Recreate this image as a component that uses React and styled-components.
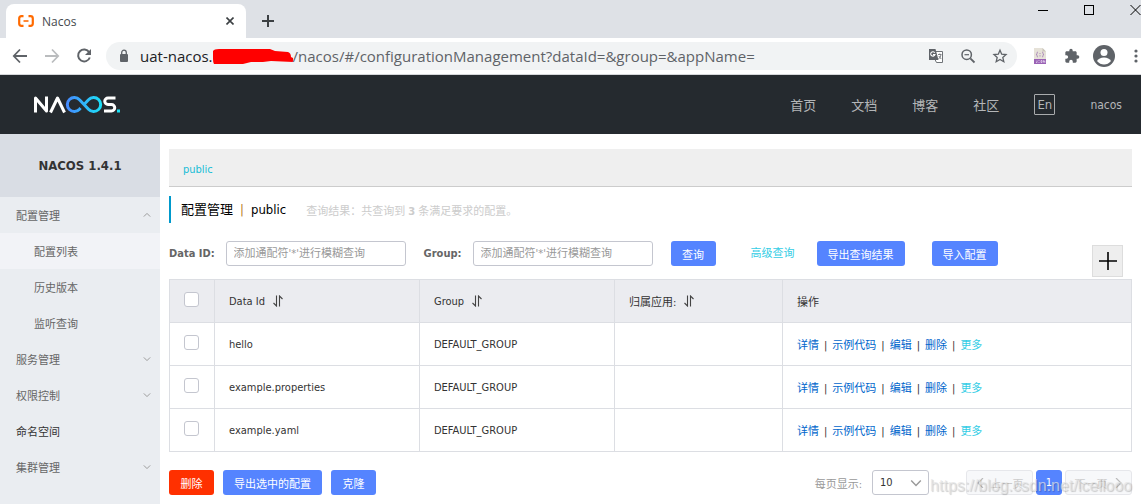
import React from "react";
import styled, { createGlobalStyle } from "styled-components";

const GlobalStyle = createGlobalStyle`
  * {
    box-sizing: border-box;
  }

  body {
    margin: 0;
    background-color: white;
    color: #333333;
    font-family: "DejaVu Sans Condensed", "Noto Sans CJK SC", sans-serif;
    font-size: 11px;
  }

  button,
  input,
  select {
    font-family: inherit;
    font-size: 11px;
    margin: 0;
  }

  a {
    text-decoration: none;
  }

  svg {
    display: block;
    flex-shrink: 0;
  }
`;

const Page = styled.div`
  min-height: 100vh;
  display: flex;
  flex-direction: column;
`;

const TabStrip = styled.div`
  height: 38px;
  display: flex;
  align-items: flex-end;
  padding-left: 6px;
  background-color: #dee1e6;
`;

const Tab = styled.div`
  width: 240px;
  height: 34px;
  display: flex;
  align-items: center;
  gap: 8px;
  padding: 0 10px 0 12px;
  border-radius: 8px 8px 0 0;
  background-color: white;
  font-family: "Open Sans", sans-serif;
  font-size: 12px;
  color: #45494d;
`;

const TabName = styled.span`
  flex: 1;
`;

const IconButton = styled.button`
  display: flex;
  align-items: center;
  justify-content: center;
  width: ${(props) => props.$width || 16}px;
  height: ${(props) => props.$height || 16}px;
  padding: 0;
  border: none;
  background: none;
  color: ${(props) => props.$color || "#5f6368"};
`;

const NewTab = styled.div`
  height: 34px;
  display: flex;
  align-items: center;
  padding-left: 14px;
`;

const WindowButtons = styled.div`
  height: 38px;
  display: flex;
  align-items: flex-start;
  margin-left: auto;

  button {
    flex-shrink: 0;
  }
`;

const Toolbar = styled.div`
  height: 37px;
  display: flex;
  align-items: center;
  padding: 0 0 0 12px;
  background-color: white;
  border-bottom: 1px solid #d5d7da;
`;

const NavButtons = styled.div`
  display: flex;
  gap: 16px;
  margin-right: 14px;
`;

const AddressBar = styled.div`
  flex: 1;
  height: 28px;
  display: flex;
  align-items: center;
  padding: 0 9px 0 10px;
  border-radius: 14px;
  background-color: #f1f3f4;
`;

const Address = styled.div`
  flex: 1;
  display: flex;
  align-items: center;
  margin-left: 8px;
  font-family: "Open Sans", sans-serif;
  font-size: 15px;
  line-height: 20px;
  color: #5f6368;
  white-space: nowrap;
`;

const Host = styled.span`
  color: #202124;
`;

const AddressIcons = styled.div`
  display: flex;
  gap: 16px;
`;

const Extensions = styled.div`
  display: flex;
  align-items: center;
  padding-left: 7px;
`;

const Header = styled.header`
  height: 59px;
  display: flex;
  align-items: center;
  justify-content: space-between;
  padding: 0 19px 0 34px;
  background-color: #252a2f;
`;

const HeaderNav = styled.nav`
  display: flex;
  align-items: center;
  gap: 35px;
`;

const HeaderLink = styled.a`
  font-size: ${(props) => (props.$small ? 12 : 13)}px;
  color: #b4b6b8;
`;

const LanguageButton = styled.button`
  width: 21px;
  height: 21px;
  padding: 0;
  border: 1px solid #a9abad;
  border-radius: 1px;
  background: none;
  color: #b4b6b8;
  line-height: 18px;

  && {
    font-size: 13px;
  }
`;

const Body = styled.div`
  flex: 1;
  display: flex;
`;

const Sidebar = styled.aside`
  width: 160px;
  flex-shrink: 0;
  background-color: #eaedf1;
`;

const SidebarTitle = styled.h1`
  height: 63px;
  margin: 0;
  font-size: 13px;
  line-height: 63px;
  text-align: center;
  background-color: #d9dde4;
`;

const MenuItem = styled.a`
  height: 36px;
  display: flex;
  align-items: center;
  justify-content: space-between;
  padding: 0 9px 0 ${(props) => (props.$sub ? 34 : 16)}px;
  background-color: ${(props) => (props.$active ? "#f2f3f7" : "transparent")};
  color: ${(props) => (props.$dark ? "#333333" : "#666666")};
`;

const Content = styled.main`
  flex: 1;
  min-width: 0;
  padding: 15px 9px 8px;
`;

const NamespaceBar = styled.div`
  height: 38px;
  padding: 0 14px;
  border-bottom: 1px solid #cccccc;
  background-color: #efefef;
  line-height: 42px;

  a {
    color: #18bdd6;
  }
`;

const TitleRow = styled.div`
  height: 27px;
  display: flex;
  align-items: center;
  margin-top: 9px;
  padding-left: 10px;
  border-left: 2px solid #09c;
`;

const Title = styled.h2`
  display: flex;
  align-items: baseline;
  gap: 7px;
  margin: 0 20px 0 0;
  font-size: 13px;
  font-weight: normal;
  line-height: 27px;
  color: #000000;
`;

const Divider = styled.span`
  color: #b8791a;
`;

const ResultText = styled.span`
  color: #cccccc;
`;

const SearchRow = styled.form`
  display: flex;
  align-items: flex-start;
  margin: 18px 9px 2px 0;
`;

const FieldLabel = styled.label`
  margin-right: 11px;
  font-weight: bold;
  line-height: 25px;
  color: #666666;
  white-space: nowrap;
`;

const TextInput = styled.input`
  width: 180px;
  height: 25px;
  margin-right: 18px;
  padding: 0 7px;
  border: 1px solid #c4c6cf;
  border-radius: 3px;

  &::placeholder {
    color: #999999;
  }
`;

const Button = styled.button`
  height: 25px;
  min-width: 45px;
  padding: 0 11px;
  border: none;
  border-radius: 3px;
  background-color: ${(props) => (props.$danger ? "#ff3000" : "#5584ff")};
  color: white;
  white-space: nowrap;
`;

const SearchButtons = styled.div`
  display: flex;
  flex: 1;
`;

const AdvancedLink = styled.a`
  margin: 0 22px 0 35px;
  line-height: 25px;
  color: #33cde5;
  white-space: nowrap;
`;

const ImportButton = styled(Button)`
  margin-left: 27px;
`;

const AddButton = styled.button`
  width: 31px;
  height: 32px;
  display: flex;
  align-items: center;
  justify-content: center;
  margin-top: 4px;
  padding: 0;
  border: 1px solid #dddddd;
  background-color: #eeeeee;
`;

const ConfigTable = styled.table`
  width: 100%;
  border-collapse: collapse;
  table-layout: fixed;

  th,
  td {
    height: 43px;
    padding: 0 14px;
    border: 1px solid #dcdee3;
    font-weight: normal;
    text-align: left;
  }

  th {
    background-color: #ebecf0;
  }
`;

const Column = styled.col`
  width: ${(props) => props.$width};
`;

const HeadCell = styled.span`
  display: flex;
  align-items: center;
  gap: 8px;
`;

const Checkbox = styled.input`
  appearance: none;
  display: block;
  width: 15px;
  height: 15px;
  margin: 0 0 4px;
  border: 1px solid #c4c6cf;
  border-radius: 3px;
  background-color: white;
`;

const Actions = styled.div`
  display: flex;
  align-items: baseline;
  gap: 5px;
  white-space: nowrap;
`;

const ActionLink = styled.a`
  color: ${(props) => (props.$more ? "#33cde5" : "#0066cc")};
`;

const Footer = styled.div`
  display: flex;
  align-items: center;
  gap: 9px;
  margin-top: 18px;
`;

const Pagination = styled.nav`
  display: flex;
  align-items: center;
  margin-left: auto;
`;

const SizeLabel = styled.label`
  margin-right: 10px;
  color: #999999;
`;

const SizeSelect = styled.div`
  display: grid;
  align-items: center;
  width: 57px;
  margin-right: 37px;

  select,
  svg {
    grid-area: 1 / 1;
  }

  select {
    appearance: none;
    width: 100%;
    height: 25px;
    padding: 0 7px;
    border: 1px solid #c4c6cf;
    border-radius: 3px;
    background-color: white;
    color: #333333;
  }

  svg {
    justify-self: end;
    margin-right: 7px;
    pointer-events: none;
  }
`;

const PageButton = styled.button`
  height: 25px;
  width: ${(props) => (props.$current ? 26 : 67)}px;
  display: flex;
  align-items: center;
  justify-content: center;
  gap: 5px;
  padding: 0;
  border: 1px solid ${(props) => (props.$current ? "#5584ff" : "#e6e7eb")};
  border-radius: 3px;
  background-color: ${(props) => (props.$current ? "#5584ff" : "#f7f8fa")};
  color: ${(props) => (props.$current ? "white" : "#cccccc")};
`;

const PageButtons = styled.div`
  display: flex;
  gap: 3px;
`;

const Watermark = styled.div`
  position: absolute;
  right: 9px;
  bottom: 8px;
  font-family: "Liberation Sans", sans-serif;
  font-size: 16px;
  line-height: 20px;
  color: rgba(228, 228, 228, 0.7);
  text-shadow: 1px 1px 1px rgba(0, 0, 0, 0.2);
  pointer-events: none;
`;

const Frame = styled.div`
  position: relative;
`;

const Chevron = ({ direction, size = 8, color = "#999999" }) => {
  const paths = {
    up: "M1 7 L5 3 L9 7",
    down: "M1 3 L5 7 L9 3",
    left: "M7 0 L2 5 L7 10",
    right: "M3 0 L8 5 L3 10",
  };
  return (
    <svg width={size} height={size} viewBox="0 0 10 10">
      <path d={paths[direction]} fill="none" stroke={color} strokeWidth="1.2" />
    </svg>
  );
};

const SortIcon = () => (
  <svg width="10" height="12" viewBox="0 0 10 12">
    <path
      d="M3.5 0.5 V11 L0.5 8 M6.5 11.5 V1 L9.5 4"
      fill="none"
      stroke="#444444"
      strokeWidth="1.1"
    />
  </svg>
);

const NacosLogo = () => (
  <svg width="87" height="18" viewBox="0 1 87 18" role="img" aria-label="Nacos">
    <defs>
      <linearGradient id="loop" gradientUnits="userSpaceOnUse" x1="32" x2="68" y1="0" y2="0">
        <stop offset="0" stopColor="#4688ff" />
        <stop offset="1" stopColor="#1be1f6" />
      </linearGradient>
    </defs>
    <g fill="none" strokeWidth="3" strokeLinejoin="round">
      <path d="M1.5 17.5 V3 L12.5 16 V1.5" stroke="white" />
      <path d="M16.5 17.5 L23.5 3 L30.5 17.5" stroke="white" />
      <path
        d="M46.5 13 L45.5 14.2 A7 7 0 1 1 45.5 4.8 L54.5 14.2 A7 7 0 1 0 54.5 4.8 L50.5 9"
        stroke="url(#loop)"
      />
      <path
        d="M81.5 3 H74 A3.2 3.2 0 0 0 74 9.5 H77.5 A3.2 3.2 0 0 1 77.5 16 H70"
        stroke="white"
      />
    </g>
    <rect x="83" y="14.5" width="3" height="3" fill="#1be1f6" />
  </svg>
);

const Favicon = () => (
  <svg width="16" height="12" viewBox="0 0 16 12">
    <path
      d="M5.5 1.2 H3.5 Q1.2 1.2 1.2 3.5 V8.5 Q1.2 10.8 3.5 10.8 H5.5 M10.5 1.2 H12.5 Q14.8 1.2 14.8 3.5 V8.5 Q14.8 10.8 12.5 10.8 H10.5"
      fill="none"
      stroke="#ff6a00"
      strokeWidth="2.2"
    />
    <path d="M5.5 6 H10.5" stroke="#ff6a00" strokeWidth="1.6" />
  </svg>
);

const Redaction = () => (
  <svg width="80" height="18" viewBox="2 0 80 18">
    <path
      d="M2 4 Q3 2 8 2 L59 2 L64 4 L77 5 Q80 6 80 10 L82 11 L82 15 L60 14 L52 15 L40 15 L32 17 L3 17 Q2 16 2 12 Z"
      fill="#ff0000"
    />
  </svg>
);

const BrowserTabs = () => (
  <TabStrip>
    <Tab>
      <Favicon />
      <TabName>Nacos</TabName>
      <IconButton aria-label="Close tab" $width={12} $color="#3c4043">
        <svg width="8" height="8" viewBox="0 0 8 8">
          <path d="M0.5 0.5 L7.5 7.5 M7.5 0.5 L0.5 7.5" stroke="currentColor" strokeWidth="1.6" />
        </svg>
      </IconButton>
    </Tab>
    <NewTab>
      <IconButton aria-label="New tab" $color="#3c4043">
        <svg width="12" height="12" viewBox="0 0 12 12">
          <path d="M6 0 V12 M0 6 H12" stroke="currentColor" strokeWidth="2" />
        </svg>
      </IconButton>
    </NewTab>
    <WindowButtons>
      <IconButton aria-label="Minimize" $width={46} $height={20} $color="#000000">
        <svg width="10" height="10" viewBox="0 0 10 10">
          <path d="M0 5.5 H10" stroke="currentColor" />
        </svg>
      </IconButton>
      <IconButton aria-label="Maximize" $width={46} $height={20} $color="#000000">
        <svg width="10" height="10" viewBox="0 0 10 10">
          <rect x="0.5" y="0.5" width="9" height="9" fill="none" stroke="currentColor" />
        </svg>
      </IconButton>
      <IconButton aria-label="Close" $width={29} $height={20} $color="#000000">
        <svg width="29" height="10" viewBox="0 0 29 10">
          <path d="M18.5 0 L28.5 10 M28.5 0 L18.5 10" stroke="currentColor" />
        </svg>
      </IconButton>
    </WindowButtons>
  </TabStrip>
);

const BrowserToolbar = () => (
  <Toolbar>
    <NavButtons>
      <IconButton aria-label="Back">
        <svg width="16" height="16" viewBox="0 0 16 16">
          <path d="M15 8 H2 M8 1.5 L1.8 8 L8 14.5" fill="none" stroke="currentColor" strokeWidth="1.8" />
        </svg>
      </IconButton>
      <IconButton aria-label="Forward" $color="#babcbe">
        <svg width="16" height="16" viewBox="0 0 16 16">
          <path d="M1 8 H14 M8 1.5 L14.2 8 L8 14.5" fill="none" stroke="currentColor" strokeWidth="1.8" />
        </svg>
      </IconButton>
      <IconButton aria-label="Reload">
        <svg width="16" height="16" viewBox="0 0 16 16">
          <path d="M13.2 4.2 A6 6 0 1 0 13.8 9.5" fill="none" stroke="currentColor" strokeWidth="2" />
          <path d="M15 1 V7 H9 Z" fill="currentColor" />
        </svg>
      </IconButton>
    </NavButtons>
    <AddressBar>
      <svg width="16" height="16" viewBox="0 0 16 16">
        <rect x="4" y="6" width="8" height="8" rx="1" fill="#5f6368" />
        <path d="M5.7 6.5 V4.5 A2.3 2.3 0 0 1 10.3 4.5 V6.5" fill="none" stroke="#5f6368" strokeWidth="1.3" />
      </svg>
      <Address>
        <Host>uat-nacos.</Host>
        <Redaction />
        <span>/nacos/#/configurationManagement?dataId=&amp;group=&amp;appName=</span>
      </Address>
      <AddressIcons>
        <IconButton aria-label="Translate">
          <svg width="16" height="16" viewBox="0 0 16 16">
            <path d="M7 3.5 H14.5 V14.5 H8.5 L7 11.5" fill="white" stroke="#6f7377" />
            <path d="M1 1 H7.5 L10.5 12 H1 Z" fill="#5f6368" />
            <path d="M6.8 4.8 A2.2 2.2 0 1 0 7 6.6 H5" fill="none" stroke="white" strokeWidth="1.1" />
            <path d="M10 6.5 H13.5 M11.8 5.5 V6.5 M13 6.8 Q12.5 9.5 10.5 11 M10.8 8 L13.2 11" fill="none" stroke="#6f7377" strokeWidth="0.9" />
          </svg>
        </IconButton>
        <IconButton aria-label="Zoom">
          <svg width="16" height="16" viewBox="0 0 16 16">
            <circle cx="6.7" cy="6.7" r="4.7" fill="none" stroke="currentColor" strokeWidth="1.5" />
            <path d="M10.3 10.3 L14.5 14.5" stroke="currentColor" strokeWidth="1.8" />
            <path d="M4.5 6.7 H9" stroke="currentColor" strokeWidth="1.2" />
          </svg>
        </IconButton>
        <IconButton aria-label="Bookmark">
          <svg width="16" height="16" viewBox="0 0 16 16">
            <path
              d="M8 2.2 L9.7 6.2 L14 6.6 L10.8 9.4 L11.8 13.7 L8 11.4 L4.2 13.7 L5.2 9.4 L2 6.6 L6.3 6.2 Z"
              fill="none"
              stroke="currentColor"
              strokeWidth="1.3"
            />
          </svg>
        </IconButton>
      </AddressIcons>
    </AddressBar>
    <Extensions>
      <IconButton aria-label="JSON viewer" $width={32}>
        <svg width="16" height="16" viewBox="0 0 16 16">
          <path d="M2 0 H10.5 L14 3.5 V16 H2 Z" fill="#e6e2d8" />
          <path d="M10.5 0 L14 3.5 H10.5 Z" fill="#c9c4ba" />
          <path d="M6 4 Q4.8 4 5 5.5 Q5 6.5 4 6.5 Q5 6.5 5 7.5 Q4.8 9 6 9 M10 4 Q11.2 4 11 5.5 Q11 6.5 12 6.5 Q11 6.5 11 7.5 Q11.2 9 10 9 M8 5 V6 M8 7.2 V8.5" fill="none" stroke="#a27bb5" strokeWidth="0.8" />
          <rect x="2" y="11" width="12" height="5" fill="#9a62b5" />
          <path d="M4 14.5 H5 V12.5 M6.5 14.5 H7.5 M6.5 12.5 H7.5 M9 12.5 H10 V14.5 H9 Z M11.5 14.5 V12.5 L12.8 14.5 V12.5" fill="none" stroke="#e9dcf0" strokeWidth="0.7" />
        </svg>
      </IconButton>
      <IconButton aria-label="Extensions" $width={32}>
        <svg width="16" height="16" viewBox="0 0 24 24">
          <path
            fill="currentColor"
            d="M20.5 11H19V7c0-1.1-.9-2-2-2h-4V3.5a2.5 2.5 0 0 0-5 0V5H4c-1.1 0-2 .9-2 2v3.8h1.5a2.7 2.7 0 0 1 0 5.4H2V20c0 1.1.9 2 2 2h3.8v-1.5a2.7 2.7 0 0 1 5.4 0V22H17c1.1 0 2-.9 2-2v-4h1.5a2.5 2.5 0 0 0 0-5z"
          />
        </svg>
      </IconButton>
      <IconButton aria-label="Profile" $width={32} $height={24}>
        <svg width="24" height="24" viewBox="0 0 24 24">
          <circle cx="12" cy="12" r="11" fill="currentColor" />
          <circle cx="12" cy="8.5" r="3.5" fill="white" />
          <path d="M5 17 Q7 13.5 12 13.5 Q17 13.5 19 17 Q16 20.5 12 20.5 Q8 20.5 5 17 Z" fill="white" />
        </svg>
      </IconButton>
      <IconButton aria-label="Menu" $width={21}>
        <svg width="21" height="14" viewBox="0 0 21 14">
          <circle cx="16" cy="2" r="1.6" fill="currentColor" />
          <circle cx="16" cy="7" r="1.6" fill="currentColor" />
          <circle cx="16" cy="12" r="1.6" fill="currentColor" />
        </svg>
      </IconButton>
    </Extensions>
  </Toolbar>
);

const menu = [
  { name: "配置管理", arrow: "up" },
  { name: "配置列表", sub: true, active: true },
  { name: "历史版本", sub: true },
  { name: "监听查询", sub: true },
  { name: "服务管理", arrow: "down" },
  { name: "权限控制", arrow: "down" },
  { name: "命名空间", dark: true },
  { name: "集群管理", arrow: "down" },
];

const configs = [
  { dataId: "hello", group: "DEFAULT_GROUP" },
  { dataId: "example.properties", group: "DEFAULT_GROUP" },
  { dataId: "example.yaml", group: "DEFAULT_GROUP" },
];

class App extends React.Component {
  state = {
    dataId: "",
    group: "",
    pageSize: "10",
  };

  handleChange = (event) => {
    this.setState({ [event.target.name]: event.target.value });
  };

  render() {
    return (
      <Frame>
        <GlobalStyle />
        <Page>
          <BrowserTabs />
          <BrowserToolbar />
          <Header>
            <NacosLogo />
            <HeaderNav>
              <HeaderLink href="#home">首页</HeaderLink>
              <HeaderLink href="#docs">文档</HeaderLink>
              <HeaderLink href="#blog">博客</HeaderLink>
              <HeaderLink href="#community">社区</HeaderLink>
              <LanguageButton>En</LanguageButton>
              <HeaderLink href="#user" $small>
                nacos
              </HeaderLink>
            </HeaderNav>
          </Header>
          <Body>
            <Sidebar>
              <SidebarTitle>NACOS 1.4.1</SidebarTitle>
              {menu.map((item) => (
                <MenuItem
                  key={item.name}
                  href="#menu"
                  $sub={item.sub}
                  $active={item.active}
                  $dark={item.dark}
                >
                  {item.name}
                  {item.arrow && <Chevron direction={item.arrow} />}
                </MenuItem>
              ))}
            </Sidebar>
            <Content>
              <NamespaceBar>
                <a href="#public">public</a>
              </NamespaceBar>
              <TitleRow>
                <Title>
                  <span>配置管理</span>
                  <Divider>|</Divider>
                  <span>public</span>
                </Title>
                <ResultText>
                  查询结果：共查询到 <strong>3</strong> 条满足要求的配置。
                </ResultText>
              </TitleRow>
              <SearchRow onSubmit={(event) => event.preventDefault()}>
                <FieldLabel htmlFor="dataId">Data ID:</FieldLabel>
                <TextInput
                  id="dataId"
                  name="dataId"
                  placeholder="添加通配符'*'进行模糊查询"
                  value={this.state.dataId}
                  onChange={this.handleChange}
                />
                <FieldLabel htmlFor="group">Group:</FieldLabel>
                <TextInput
                  id="group"
                  name="group"
                  placeholder="添加通配符'*'进行模糊查询"
                  value={this.state.group}
                  onChange={this.handleChange}
                />
                <SearchButtons>
                  <Button type="submit">查询</Button>
                  <AdvancedLink href="#advanced">高级查询</AdvancedLink>
                  <Button type="button">导出查询结果</Button>
                  <ImportButton type="button">导入配置</ImportButton>
                </SearchButtons>
                <AddButton type="button" aria-label="新建配置">
                  <svg width="18" height="18" viewBox="0 0 18 18">
                    <path d="M9 0 V18 M0 9 H18" stroke="#000000" strokeWidth="1.6" />
                  </svg>
                </AddButton>
              </SearchRow>
              <ConfigTable>
                <colgroup>
                  <Column $width="45px" />
                  <Column $width="205px" />
                  <Column $width="195px" />
                  <Column $width="168px" />
                  <Column $width="auto" />
                </colgroup>
                <thead>
                  <tr>
                    <th>
                      <Checkbox type="checkbox" aria-label="全选" />
                    </th>
                    <th>
                      <HeadCell>
                        Data Id <SortIcon />
                      </HeadCell>
                    </th>
                    <th>
                      <HeadCell>
                        Group <SortIcon />
                      </HeadCell>
                    </th>
                    <th>
                      <HeadCell>
                        归属应用: <SortIcon />
                      </HeadCell>
                    </th>
                    <th>操作</th>
                  </tr>
                </thead>
                <tbody>
                  {configs.map((config) => (
                    <tr key={config.dataId}>
                      <td>
                        <Checkbox type="checkbox" aria-label={config.dataId} />
                      </td>
                      <td>{config.dataId}</td>
                      <td>{config.group}</td>
                      <td></td>
                      <td>
                        <Actions>
                          <ActionLink href="#detail">详情</ActionLink>|
                          <ActionLink href="#code">示例代码</ActionLink>|
                          <ActionLink href="#edit">编辑</ActionLink>|
                          <ActionLink href="#delete">删除</ActionLink>|
                          <ActionLink href="#more" $more>
                            更多
                          </ActionLink>
                        </Actions>
                      </td>
                    </tr>
                  ))}
                </tbody>
              </ConfigTable>
              <Footer>
                <Button $danger>删除</Button>
                <Button>导出选中的配置</Button>
                <Button>克隆</Button>
                <Pagination>
                  <SizeLabel htmlFor="pageSize">每页显示:</SizeLabel>
                  <SizeSelect>
                    <select
                      id="pageSize"
                      name="pageSize"
                      value={this.state.pageSize}
                      onChange={this.handleChange}
                    >
                      <option>10</option>
                      <option>20</option>
                      <option>30</option>
                    </select>
                    <Chevron direction="down" size={12} />
                  </SizeSelect>
                  <PageButtons>
                    <PageButton disabled>
                      <Chevron direction="left" size={10} color="#bbbbbb" />
                      上一页
                    </PageButton>
                    <PageButton $current>1</PageButton>
                    <PageButton disabled>
                      下一页
                      <Chevron direction="right" size={10} color="#bbbbbb" />
                    </PageButton>
                  </PageButtons>
                </Pagination>
              </Footer>
            </Content>
          </Body>
        </Page>
        <Watermark>https://blog.csdn.net/icellooo</Watermark>
      </Frame>
    );
  }
}

export default App;
